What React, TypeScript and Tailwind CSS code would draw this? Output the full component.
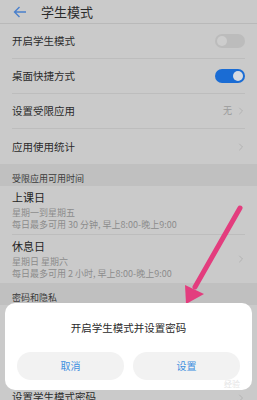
import { ChevronRight } from "lucide-react";

const font = { fontFamily: '"Noto Sans CJK SC", "Noto Sans", sans-serif' };

function Toggle({ on }: { on: boolean }) {
  return (
    <div
      className={`w-[30px] h-[14px] rounded-full flex items-center px-[2px] ${
        on ? "bg-[#1a6cd4] justify-end" : "bg-[#bcbcbc] justify-start"
      }`}
    >
      <div className={`w-[10px] h-[10px] rounded-full ${on ? "bg-[#d6dbe2]" : "bg-[#cdcdcd]"}`} />
    </div>
  );
}

function Row({ label, right }: { label: string; right?: React.ReactNode }) {
  return (
    <div className="h-[35px] mx-[12px] flex items-center justify-between border-b border-[#bdbdbd]">
      <span className="text-[10.5px] text-[#2a2a2a]">{label}</span>
      {right}
    </div>
  );
}

function Chevron() {
  return <ChevronRight size={12} strokeWidth={1.5} className="text-[#a9a9a9] -mr-[2px]" />;
}

function TimeRow({ title, days, limit, chevron, last }: { title: string; days: string; limit: string; chevron?: boolean; last?: boolean }) {
  return (
    <div
      className={`mx-[12px] flex items-center justify-between ${
        last ? "h-[48px]" : "h-[49px] border-b border-[#bdbdbd]"
      }`}
    >
      <div className="flex flex-col leading-none">
        <span className="text-[11px] text-[#252525]">{title}</span>
        <span className="text-[9px] text-[#8c8c8c] mt-[5px]">{days}</span>
        <span className="text-[9px] text-[#8c8c8c] mt-[3px]">{limit}</span>
      </div>
      {chevron && <Chevron />}
    </div>
  );
}

export default function App() {
  return (
    <div className="relative w-[257px] h-[400px] overflow-hidden bg-[#cacaca]" style={font}>
      {/* header */}
      <div className="h-[24px] flex items-center border-b border-[#b9b9b9]">
        <svg width="14" height="12" viewBox="0 0 14 12" className="ml-[13px]">
          <path d="M13 6H1.5M6.5 1L1.5 6l5 5" fill="none" stroke="#4a80cc" strokeWidth="1.4" />
        </svg>
        <span className="ml-[14px] text-[13px] text-[#2b2b2b]">学生模式</span>
      </div>

      <Row label="开启学生模式" right={<Toggle on={false} />} />
      <Row label="桌面快捷方式" right={<Toggle on={true} />} />
      <Row
        label="设置受限应用"
        right={
          <div className="flex items-center gap-[3px]">
            <span className="text-[9px] text-[#9a9a9a]">无</span>
            <Chevron />
          </div>
        }
      />
      <div className="h-[35px] mx-[12px] flex items-center justify-between">
        <span className="text-[10.5px] text-[#2a2a2a]">应用使用统计</span>
        <Chevron />
      </div>

      <div className="h-[22px] bg-[#c0c0c0] flex items-end pb-[3px] pl-[12px]">
        <span className="text-[9px] text-[#3a3a3a] leading-none">受限应用可用时间</span>
      </div>

      <TimeRow title="上课日" days="星期一到星期五" limit="每日最多可用 30 分钟, 早上8:00-晚上9:00" />
      <TimeRow title="休息日" days="星期日 星期六" limit="每日最多可用 2 小时, 早上8:00-晚上9:00" chevron last />

      <div className="h-[22px] bg-[#c0c0c0] flex items-end pb-[3px] pl-[12px]">
        <span className="text-[9px] text-[#3a3a3a] leading-none">密码和隐私</span>
      </div>
      {/* rows hidden behind the dialog */}
      <div className="h-[83px]" />
      <div className="h-[35px] mx-[12px] flex items-start justify-between pt-[4px]">
        <span className="text-[10.5px] text-[#2a2a2a] leading-none">设置学生模式密码</span>
        <Chevron />
      </div>

      {/* pink arrow */}
      <svg className="absolute left-0 top-0" width="257" height="400" viewBox="0 0 257 400">
        <line x1="240" y1="208" x2="195" y2="287" stroke="#e33d7e" strokeWidth="5" strokeLinecap="round" />
        <polygon points="186,304 185,285 204,294" fill="#e33d7e" />
      </svg>

      {/* dialog */}
      <div className="absolute left-[5px] top-[303px] w-[247px] h-[87px] bg-white rounded-[10px] flex flex-col items-center">
        <span className="mt-[20px] text-[10.5px] text-[#2a2a2a] leading-none">开启学生模式并设置密码</span>
        <div className="mt-[18px] flex gap-[9px]">
          <div className="w-[107px] h-[28px] rounded-full bg-[#f2f2f2] flex items-center justify-center text-[10px] text-[#3f8fe0]">
            取消
          </div>
          <div className="w-[107px] h-[28px] rounded-full bg-[#f2f2f2] flex items-center justify-center text-[10px] text-[#3f8fe0]">
            设置
          </div>
        </div>
        <span className="absolute right-[12px] bottom-[2px] text-[8px] text-[#e4e4e4] leading-none">经验</span>
      </div>
    </div>
  );
}
